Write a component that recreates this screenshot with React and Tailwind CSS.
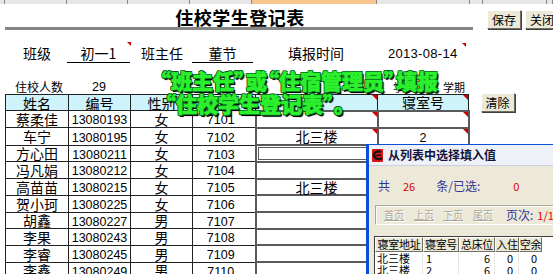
import React from "react"

const strip = [
  { w: "w-[5px]", bg: "bg-[#e6e6e6]" },
  { w: "w-[62px]", bg: "bg-[#e6e6e6]" },
  { w: "w-[61px]", bg: "bg-[#e6e6e6]" },
  { w: "w-[62px]", bg: "bg-[#e6e6e6]" },
  { w: "w-[62px]", bg: "bg-[#e6e6e6]" },
  { w: "w-[125px]", bg: "bg-[#f7c68c]" },
  { w: "w-[93px]", bg: "bg-[#e6e6e6]" },
  { w: "w-[13px]", bg: "bg-[#e6e6e6]" },
  { w: "w-[64px]", bg: "bg-[#e6e6e6]" },
  { w: "w-[6px]", bg: "bg-[#e6e6e6]" },
]

const students = [
  { name: "蔡柔佳", id: "13080193", sex: "女", no: "7101", bld: "", room: "", h: "h-[17px]", mark: true },
  { name: "车宁", id: "13080195", sex: "女", no: "7102", bld: "北三楼", room: "2", h: "h-[16px]", mark: true },
  { name: "方心田", id: "13080211", sex: "女", no: "7103", bld: "", room: "", h: "h-[16px]", sel: true },
  { name: "冯凡娟", id: "13080212", sex: "女", no: "7104", bld: "", room: "", h: "h-[17px]" },
  { name: "高苗苗", id: "13080215", sex: "女", no: "7105", bld: "北三楼", room: "", h: "h-[16px]" },
  { name: "贺小珂", id: "13080225", sex: "女", no: "7106", bld: "", room: "", h: "h-[17px]" },
  { name: "胡鑫", id: "13080227", sex: "男", no: "7107", bld: "", room: "", h: "h-[16px]" },
  { name: "李果", id: "13080243", sex: "男", no: "7108", bld: "", room: "", h: "h-[16px]" },
  { name: "李睿", id: "13080245", sex: "男", no: "7109", bld: "", room: "", h: "h-[17px]" },
  { name: "李鑫", id: "13080249", sex: "男", no: "7110", bld: "", room: "", h: "h-[16px]" },
]

const rooms = [
  { addr: "北三楼", no: "1", beds: "6", inn: "0", free: "0" },
  { addr: "北三楼", no: "2", beds: "6", inn: "0", free: "0" },
]

function Mark() {
  return (
    <span className="absolute top-0 right-0 w-0 h-0 border-t-[5px] border-t-[#d00000] border-l-[5px] border-l-transparent" />
  )
}

function XpButton({ children, className = "" }) {
  return (
    <div
      className={
        "flex items-center justify-center bg-[#ece9d8] border border-t-white border-l-white border-r-[#716f64] border-b-[#716f64] shadow-[1px_1px_0_#404040] text-[12px] " +
        className
      }
    >
      {children}
    </div>
  )
}

// open and close quotes of the callout sit tight against the words
const qo = "inline-block -ml-[9px]"
const qc = "inline-block -mr-[9px]"

const num = "font-['Liberation_Sans',sans-serif] text-[12.5px]"
const cell = "border border-[#222] text-center p-0 leading-none"
const boxCell = "relative border-2 border-[#5a5a5a] text-center p-0 leading-none"

export default function App() {
  return (
    <div className="relative w-[553px] h-[274px] overflow-hidden bg-white text-black whitespace-nowrap font-['Noto_Sans_CJK_SC',sans-serif]">
      {/* sheet column header strip */}
      <div className="flex h-[4px]">
        {strip.map((s, i) => (
          <div key={i} className={`${s.w} ${s.bg} border-r border-[#8a8a8a] shrink-0`} />
        ))}
      </div>

      {/* title */}
      <div className="flex">
        <div className="w-[468px] ml-[5px] shrink-0">
          <div className="h-[23px] flex items-center justify-center pl-[2px] pt-[3px] text-[18px] font-bold tracking-[0.5px] leading-none">
            住校学生登记表
          </div>
          <div className="h-[3px] bg-[#858585]" />
        </div>
        <div className="flex gap-[4px] ml-[14px] mt-[6px]">
          <XpButton className="w-[34px] h-[19px]">保存</XpButton>
          <XpButton className="w-[34px] h-[19px]">关闭</XpButton>
        </div>
      </div>

      {/* class info */}
      <div className="flex items-end h-[20px] mt-[13px] text-[14px] leading-none">
        <span className="ml-[23px] w-[44px] pb-[3px]">班级</span>
        <span className="relative w-[63px] border-b border-black text-center pb-[2px]">
          初一1
          <span className="absolute -top-[4px] -right-[1px] w-0 h-0 border-t-[4px] border-t-[#d00000] border-l-[4px] border-l-transparent" />
        </span>
        <span className="ml-[11px] w-[51px] pb-[3px]">班主任</span>
        <span className="w-[61px] border-b border-black text-center pb-[2px]">董节</span>
        <span className="ml-[35px] w-[100px] pb-[3px]">填报时间</span>
        <span className="relative w-[78px] pb-[3px] text-[13px] font-['Liberation_Sans',sans-serif] tracking-[0.3px]">
          2013-08-14
          <span className="absolute -top-[4px] right-0 w-0 h-0 border-t-[4px] border-t-[#d00000] border-l-[4px] border-l-transparent" />
        </span>
      </div>

      {/* count row */}
      <div className="flex items-center h-[14px] mt-[17px] text-[12px] leading-none">
        <span className="ml-[15px] w-[77px]">住校人数</span>
        <span className={num}>29</span>
        <span className="ml-[287px] text-[11px]">学</span>
        <span className="ml-[39px] text-[11px]">学期</span>
      </div>

      {/* main table */}
      <div className="flex items-start">
        <table className="ml-[5px] border-collapse table-fixed w-[463px] text-[14px]">
          <colgroup>
            <col className="w-[63px]" />
            <col className="w-[62px]" />
            <col className="w-[62px]" />
            <col className="w-[63px]" />
            <col className="w-[122px]" />
            <col className="w-[91px]" />
          </colgroup>
          <tbody>
            <tr className="h-[16px] bg-[#cff3fb]">
              <td className={cell}>姓名</td>
              <td className={cell}>编号</td>
              <td className={cell}>性别</td>
              <td className={cell} />
              <td className={`${cell} relative`}>
                <Mark />
              </td>
              <td className={`${cell} relative`}>
                寝室号
                <Mark />
              </td>
            </tr>
            {students.map((s) => (
              <tr key={s.id} className={s.h}>
                <td className={cell}>{s.name}</td>
                <td className={cell}>
                  <span className={num}>{s.id}</span>
                </td>
                <td className={cell}>{s.sex}</td>
                <td className={cell}>
                  <span className={`${num} pr-[6px]`}>{s.no}</span>
                </td>
                <td className={`${boxCell} ${s.sel ? "shadow-[inset_0_0_0_1px_white,inset_0_0_0_2px_#5a5a5a]" : ""}`}>
                  {s.bld}
                  {s.mark && <Mark />}
                </td>
                <td className={boxCell}>
                  <span className={num}>{s.room}</span>
                  {s.mark && <Mark />}
                </td>
              </tr>
            ))}
          </tbody>
        </table>
        <XpButton className="ml-[11px] w-[34px] h-[19px] -mt-[1px]">清除</XpButton>
      </div>

      {/* callout text over the sheet */}
      <div className="absolute left-[159px] top-[69px] text-[21px] font-black leading-[23px] text-[#2bf02b] [-webkit-text-stroke:0.7px_#2bf02b] [text-shadow:-1px_-1px_0_#052,1px_-1px_0_#052,-1px_1px_0_#052,1px_1px_0_#052,0_-1px_0_#052,-1px_0_0_#052,2px_2px_1px_#000,1px_2px_0_#021]">
        <div>
          <span className={qo}>“</span>班主任<span className={qc}>”</span>或<span className={qo}>“</span>住宿管理员<span className={qc}>”</span>填报
        </div>
        <div className="ml-[5px]">
          <span className={qo}>“</span>住校学生登记表<span className="inline-block -mr-[10px]">”</span><span className="inline-block -mr-[10px]">。</span>
        </div>
      </div>

      {/* pick list dialog */}
      <div className="absolute left-[366px] top-[144px] w-[192px] h-[134px] border-l-[3px] border-t border-[#0a4fd8] bg-[#ece9d8] text-[12px] leading-none">
        <div className="flex items-center h-[21px] bg-[#eef1f8] border-b border-[#c9cfe0] pl-[3px]">
          <svg width="11" height="13" viewBox="0 0 11 13" className="mr-[5px]">
            <rect x="0" y="0" width="11" height="13" rx="1" fill="#d91515" />
            <path d="M9 3 C5 1 1 4 2 7 C3 10 7 11 10 9" stroke="#111" strokeWidth="2.2" fill="none" />
            <path d="M1 7 L9 6" stroke="#111" strokeWidth="1.4" />
          </svg>
          <span className="font-bold text-[12px] text-[#14143c]">从列表中选择填入值</span>
        </div>

        <div className="flex items-center h-[12px] mt-[14px] ml-[9px] text-[#333399]">
          <span>共</span>
          <span className="ml-[13px] text-[#e00000] text-[11px]">26</span>
          <span className="ml-[21px]">条/已选:</span>
          <span className="ml-[33px] text-[#e00000] text-[11px]">0</span>
        </div>

        <div className="flex items-center h-[20px] mt-[13px] ml-[6px] border border-t-[#aca899] border-l-[#aca899] border-r-white border-b-white shadow-[inset_1px_1px_0_white] pl-[8px] text-[10px] text-[#aca899] [text-shadow:1px_1px_0_white]">
          <span className="underline">首页</span>
          <span className="ml-[10px] underline">上页</span>
          <span className="ml-[9px] underline">下页</span>
          <span className="ml-[10px] underline">尾页</span>
          <span className="ml-[13px] text-[12px] text-[#333399] [text-shadow:none]">页次:</span>
          <span className="ml-[4px] text-[11px] text-[#e00000] [text-shadow:none]">1/1</span>
        </div>

        <div className="mt-[11px] ml-[5px] h-[44px] bg-white border-l border-t border-[#404040]">
          <div className="flex h-[15px]">
            {[
              ["寝室地址", "w-[48px]"],
              ["寝室号", "w-[36px]"],
              ["总床位", "w-[36px]"],
              ["入住", "w-[24px]"],
              ["空余", "w-[23px]"],
            ].map(([t, w]) => (
              <div
                key={t}
                className={`${w} shrink-0 flex items-center justify-center overflow-hidden bg-[#ece9d8] border border-t-white border-l-white border-r-[#716f64] border-b-[#716f64] text-[11px] tracking-[-0.3px]`}
              >
                {t}
              </div>
            ))}
          </div>
          {rooms.map((r) => (
            <div key={r.no} className="flex h-[12px] items-center">
              <div className="w-[48px] pl-[2px] border-r border-[#e4e4e4] text-[11px]">{r.addr}</div>
              <div className="w-[36px] pl-[3px] border-r border-[#e4e4e4] text-[11px]">{r.no}</div>
              <div className="w-[36px] pr-[4px] text-right border-r border-[#e4e4e4] text-[11px]">{r.beds}</div>
              <div className="w-[24px] pr-[5px] text-right border-r border-[#e4e4e4] text-[11px]">{r.inn}</div>
              <div className="w-[23px] pr-[5px] text-right text-[11px]">{r.free}</div>
            </div>
          ))}
        </div>
      </div>
    </div>
  )
}
